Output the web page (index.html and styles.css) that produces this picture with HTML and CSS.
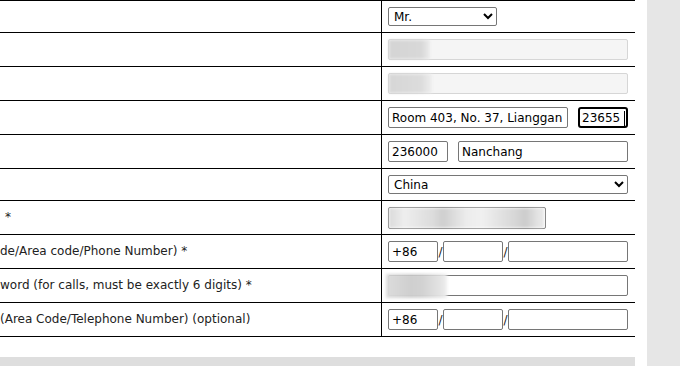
FILE: index.html
```html
<!DOCTYPE html>
<html lang="en">
<head>
    <meta charset="UTF-8">
    <meta name="viewport" content="width=device-width, initial-scale=1.0">
    <title>Contact details</title>
    <link rel="stylesheet" href="styles.css">
</head>
<body>

    <div class="page">
        <div class="content">
            <table class="form-table">
                <!-- Salutation -->
                <tr class="row-short">
                    <td class="label"></td>
                    <td class="field">
                        <select class="sel sel-title">
                            <option>Mr.</option>
                            <option>Ms.</option>
                        </select>
                    </td>
                </tr>
                <!-- Name (hidden) -->
                <tr class="row-tall">
                    <td class="label"></td>
                    <td class="field">
                        <div class="masked">
                            <input class="inp inp-full" type="text" disabled>
                            <span class="blur blur-name"></span>
                        </div>
                    </td>
                </tr>
                <tr class="row-tall">
                    <td class="label"></td>
                    <td class="field">
                        <div class="masked">
                            <input class="inp inp-full" type="text" disabled>
                            <span class="blur blur-surname"></span>
                        </div>
                    </td>
                </tr>
                <!-- Street / house number -->
                <tr class="row-tall">
                    <td class="label"></td>
                    <td class="field">
                        <div class="field-row gap10">
                            <input class="inp inp-street" type="text" value="Room 403, No. 37, Lianggan">
                            <input class="inp inp-house focused" type="text" value="23655">
                        </div>
                    </td>
                </tr>
                <!-- Zip / city -->
                <tr class="row-tall">
                    <td class="label"></td>
                    <td class="field">
                        <div class="field-row gap10">
                            <input class="inp inp-zip" type="text" value="236000">
                            <input class="inp inp-city" type="text" value="Nanchang">
                        </div>
                    </td>
                </tr>
                <!-- Country -->
                <tr class="row-short">
                    <td class="label"></td>
                    <td class="field">
                        <select class="sel sel-country">
                            <option>China</option>
                        </select>
                    </td>
                </tr>
                <!-- Email -->
                <tr class="row-tall">
                    <td class="label"><span class="cut cut-star">*</span></td>
                    <td class="field">
                        <div class="masked">
                            <input class="inp inp-mail" type="text">
                            <span class="blur blur-mail"></span>
                        </div>
                    </td>
                </tr>
                <!-- Mobile -->
                <tr class="row-tall">
                    <td class="label"><span class="cut">de/Area code/Phone Number) *</span></td>
                    <td class="field">
                        <div class="field-row">
                            <input class="inp inp-cc" type="text" value="+86">
                            <span class="slash">/</span>
                            <input class="inp inp-area" type="text">
                            <span class="slash">/</span>
                            <input class="inp inp-num" type="text">
                        </div>
                    </td>
                </tr>
                <!-- Phone password -->
                <tr class="row-tall">
                    <td class="label"><span class="cut">word (for calls, must be exactly 6 digits) *</span></td>
                    <td class="field">
                        <div class="masked">
                            <input class="inp inp-full" type="password">
                            <span class="blur blur-pin"></span>
                        </div>
                    </td>
                </tr>
                <!-- Phone (optional) -->
                <tr class="row-tall">
                    <td class="label"><span class="cut">(Area Code/Telephone Number) (optional)</span></td>
                    <td class="field">
                        <div class="field-row">
                            <input class="inp inp-cc" type="text" value="+86">
                            <span class="slash">/</span>
                            <input class="inp inp-area" type="text">
                            <span class="slash">/</span>
                            <input class="inp inp-num" type="text">
                        </div>
                    </td>
                </tr>
            </table>

            <div class="footer-bar"></div>
        </div>

        <div class="sidebar"></div>
    </div>

</body>
</html>
```

FILE: styles.css
```css
* {
    box-sizing: border-box;
}

body {
    margin: 0;
    padding: 0;
    background: #fff;
    font-family: "DejaVu Sans", Verdana, sans-serif;
    font-size: 12px;
    color: #222;
    overflow: hidden;
}

.page {
    display: flex;
    height: 366px;
}

.content {
    width: 635px;
    flex-shrink: 0;
}

.sidebar {
    flex: 1;
    margin-left: 12px;
    background: #e6e6e6;
}

/* Form table */
.form-table {
    width: 635px;
    border-collapse: separate;
    border-spacing: 0;
    border-top: 1px solid #000;
    table-layout: fixed;
}

.form-table td {
    border-bottom: 1px solid #000;
    padding: 0;
    vertical-align: middle;
}

.row-short td {
    height: 32px;
}

.row-tall td {
    height: 34px;
}

.label {
    width: 382px;
    border-right: 1px solid #000;
    overflow: hidden;
    white-space: nowrap;
}

.field {
    padding-left: 6px !important;
}

/* label text (table scrolled to the right) */
.cut {
    display: block;
    padding-bottom: 1px;
}

.cut-star {
    padding-left: 5px;
}

/* Controls */
.inp,
.sel {
    font-family: "DejaVu Sans", Verdana, sans-serif;
    font-size: 12px;
    color: #000;
    border: 1px solid #767676;
    border-radius: 2px;
    background: #fff;
    margin: 0;
}

.inp {
    height: 21px;
    padding: 1px 3px;
}

.inp:disabled {
    background: #f5f5f5;
    border-color: #d6d6d6;
}

.sel {
    height: 19px;
    padding: 0 0 0 1px;
}

.sel-title {
    width: 109px;
}

.sel-country {
    width: 240px;
}

.inp-full {
    width: 240px;
}

.inp-street {
    width: 180px;
}

.inp-house {
    width: 50px;
}

.focused {
    border: 2px solid #000;
    border-radius: 3px;
    padding: 0 2px;
    background: linear-gradient(#000, #000) no-repeat 44px 2px / 1px 15px, #fff;
}

.inp-zip {
    width: 60px;
}

.inp-city {
    width: 170px;
}

.inp-mail {
    width: 158px;
    height: 22px;
}

.inp-cc {
    width: 50px;
}

.inp-area {
    width: 60px;
}

.inp-num {
    width: 120px;
}

.field-row {
    display: flex;
    align-items: center;
}

.gap10 {
    gap: 10px;
}

.slash {
    width: 5px;
    text-align: center;
    color: #222;
}

/* blurred personal data */
.masked {
    position: relative;
    display: inline-block;
    vertical-align: middle;
}

.masked .inp {
    display: block;
}

.blur {
    position: absolute;
    filter: blur(1.5px);
}

.blur-name {
    left: 1px;
    top: 1px;
    width: 41px;
    height: 19px;
    background: linear-gradient(90deg, #d4d4d4, #d8d8d8 80%, #ececec);
}

.blur-surname {
    left: 1px;
    top: 1px;
    width: 43px;
    height: 19px;
    background: linear-gradient(90deg, #d6d6d6, #dcdcdc 75%, #eeeeee);
}

.blur-mail {
    left: 1px;
    top: 1px;
    width: 155px;
    height: 20px;
    background: linear-gradient(90deg, #dadada, #eeeeee 10%, #dcdcdc 28%, #cfcfcf 35%, #ececec 50%, #f0f0f0 60%, #d8d8d8 80%, #cccccc 88%, #e6e6e6 97%);
}

.blur-pin {
    left: -2px;
    top: -1px;
    width: 61px;
    height: 24px;
    background: linear-gradient(90deg, #dcdcdc, #cfcfcf 40%, #d2d2d2 60%, #e4e4e4 90%, #f0f0f0);
}

.footer-bar {
    margin-top: 20px;
    height: 20px;
    background: #dedede;
}
```
